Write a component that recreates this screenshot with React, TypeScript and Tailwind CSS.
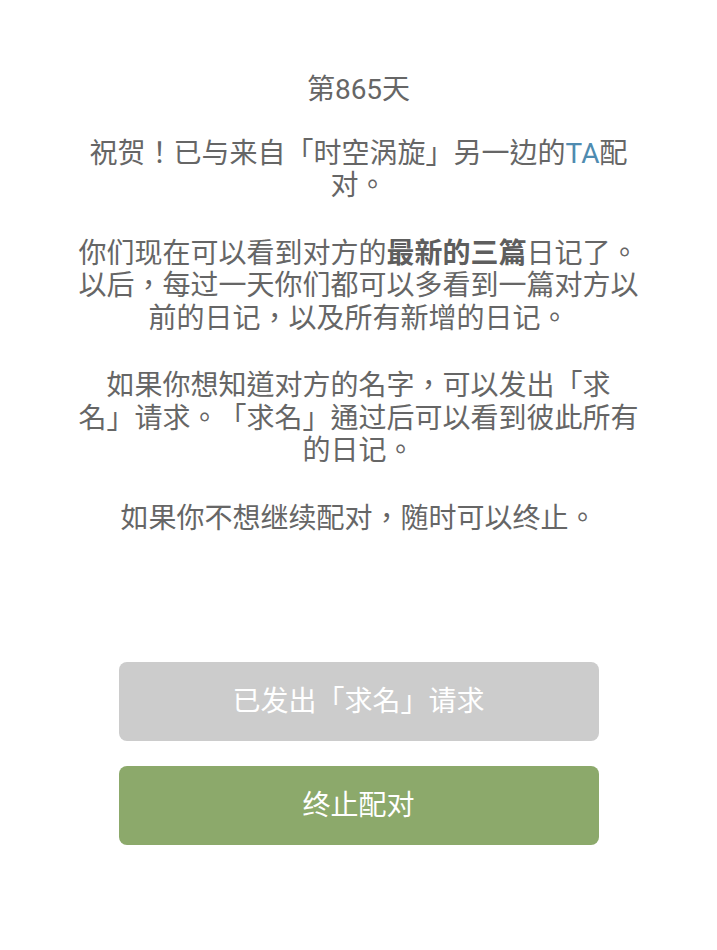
import React from 'react';

const App: React.FC = () => {
  return (
    <div
      className="min-h-[950px] w-full bg-white flex flex-col items-center text-[#666666] [text-spacing-trim:space-all]"
      style={{ fontFamily: 'Roboto, "Noto Sans CJK TC", sans-serif' }}
    >
      <div className="w-[566px] pt-[74px] text-center text-[28px] leading-[32.5px]">
        <p>第865天</p>

        <p className="mt-[31px]">
          祝贺！已与来自「时空涡旋」另一边的<span className="text-[#4f8bb0]">TA</span>配
          <br />
          对。
        </p>

        <p className="mt-[35px]">
          你们现在可以看到对方的<b className="font-bold text-[#5e5e5e]">最新的三篇</b>日记了。
          <br />
          以后，每过一天你们都可以多看到一篇对方以
          <br />
          前的日记，以及所有新增的日记。
        </p>

        <p className="mt-[35px]">
          如果你想知道对方的名字，可以发出「求
          <br />
          名」请求。「求名」通过后可以看到彼此所有
          <br />
          的日记。
        </p>

        <p className="mt-[35px]">如果你不想继续配对，随时可以终止。</p>
      </div>

      <div className="mt-[127px] w-[480px] flex flex-col gap-[25px]">
        <button className="h-[79px] rounded-[8px] bg-[#cccccc] text-white text-[28px]">
          已发出「求名」请求
        </button>
        <button className="h-[79px] rounded-[8px] bg-[#8ca96b] text-white text-[28px]">
          终止配对
        </button>
      </div>
    </div>
  );
};

export default App;
